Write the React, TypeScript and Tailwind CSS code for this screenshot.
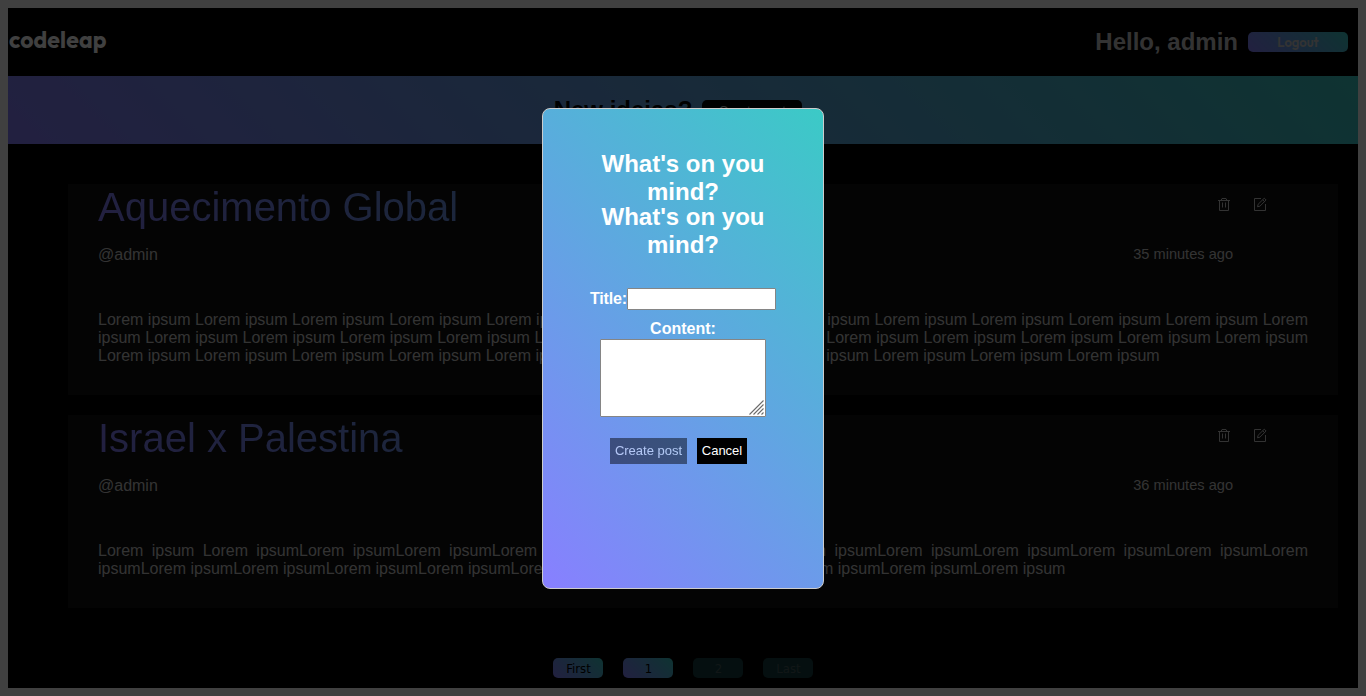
import React from "react";

const brand = "bg-linear-[45deg,#887fff,#3bcac6]";
const geometric = "font-[Outfit,Lato,sans-serif]";

function TrashIcon() {
  return (
    <svg width="14" height="14" viewBox="0 0 14 14" fill="none" stroke="currentColor" strokeWidth="1">
      <path d="M1 3.5H13M4.5 3.5V2L5 1.5H9L9.5 2V3.5M2.5 3.5V13.5H11.5V3.5M5.5 5.5V10.5M8.5 5.5V10.5" />
    </svg>
  );
}

function EditIcon() {
  return (
    <svg width="14" height="14" viewBox="0 0 14 14" fill="none" stroke="currentColor" strokeWidth="1">
      <path d="M8 1.5H1.5V13.5H12.5V7" />
      <path d="M4.5 9.8L5.1 7.3L11.3 1.2L13.1 3L6.9 9.2ZM9.7 2.8L11.5 4.6" />
    </svg>
  );
}

function ResizeGrip() {
  return (
    <svg className="pointer-events-none absolute right-[2px] bottom-[2px]" width="15" height="15" viewBox="0 0 15 15" stroke="#6b6b6b" strokeWidth="1.1">
      <path d="M0.5 14.5L14.5 0.5M4.5 14.5L14.5 4.5M8.5 14.5L14.5 8.5M12.5 14.5L14.5 12.5" />
    </svg>
  );
}

type PostProps = { title: string; author: string; time: string; body: string };

function Post({ title, author, time, body }: PostProps) {
  return (
    <article className="bg-[#101010] px-[30px] pb-[30px] text-[#ccc]">
      <div className="flex h-[46px] items-start justify-between">
        <h2 className="w-full bg-linear-[45deg,#887fff,#3bcac6] bg-clip-text text-[40px] leading-[46px] text-transparent">{title}</h2>
        <div className="flex shrink-0 gap-[22px] pt-[13px] pr-[41px]">
          <TrashIcon />
          <EditIcon />
        </div>
      </div>
      <div className="mt-[15px] flex items-start justify-between leading-[18px]">
        <span className="pt-px">{author}</span>
        <span className="pr-[75px] text-[14.6px]">{time}</span>
      </div>
      <p className="mt-[47px] text-justify leading-[18px]">{body}</p>
    </article>
  );
}

const pages = [
  { label: "First", disabled: false },
  { label: "1", disabled: false },
  { label: "2", disabled: true },
  { label: "Last", disabled: true },
];

const firstBody = Array(36).fill("Lorem ipsum").join(" ");
const secondBody = "Lorem ipsum Lorem " + Array(21).fill("ipsumLorem").join(" ") + " ipsum";

export default function App() {
  return (
    <div className="relative h-[696px] w-[1366px] overflow-hidden bg-white p-2 font-['Liberation_Sans',Arial,sans-serif] text-base">
      <div className="flex h-[680px] flex-col bg-black">
        <header className="flex h-[68px] shrink-0 items-center justify-between pr-[10px]">
          <div className={`${geometric} mb-1 ml-px text-[23px] leading-[30px] font-bold tracking-[0.1px] text-white`}>codeleap</div>
          <div className="flex items-center gap-[10px]">
            <h1 className="text-[24px] font-bold text-[#ccc]">Hello, admin</h1>
            <button className={`${brand} ${geometric} h-5 w-[100px] rounded-[5px] text-[13px] leading-[21px] font-semibold text-[#ccc]`}>Logout</button>
          </div>
        </header>

        <section className={`${brand} flex h-[68px] shrink-0 items-center justify-center gap-[10px] pr-[10px]`}>
          <h2 className="text-[24px] font-bold text-black">New ideias?</h2>
          <button className="h-5 w-[100px] rounded-[5px] bg-black text-[13px] leading-[22px] text-[#ccc]">Create post</button>
        </section>

        <main className="mt-10 mr-5 ml-[60px] flex flex-col gap-5">
          <Post title="Aquecimento Global" author="@admin" time="35 minutes ago" body={firstBody} />
          <Post title="Israel x Palestina" author="@admin" time="36 minutes ago" body={secondBody} />
        </main>

        <nav className="mt-[50px] flex justify-center gap-5">
          {pages.map((p) => (
            <button
              key={p.label}
              className={`h-5 w-[50px] rounded-[5px] pl-px font-['DejaVu_Sans_Condensed','DejaVu_Sans',sans-serif] text-[13px] leading-[21px] ${
                p.disabled ? "bg-[#143e40] text-[#465a5c]" : "bg-linear-[45deg,#887fff,#3bcac6] text-black"
              }`}
            >
              {p.label}
            </button>
          ))}
        </nav>
      </div>

      <div className="absolute inset-0 flex justify-center bg-black/75 pt-[108px]">
        <form className={`${brand} flex h-[481px] w-[282px] flex-col items-center rounded-[8px] border border-[#ccc] font-bold text-white`}>
          <h2 className="mt-[41px] w-[180px] text-center text-[24px] leading-[28px]">What's on you mind?</h2>
          <h2 className="-mt-[3px] w-[180px] text-center text-[24px] leading-[28px]">What's on you mind?</h2>
          <div className="mt-[29px] flex items-center leading-[18px]">
            <label htmlFor="title" className="tracking-[-0.15px]">Title:</label>
            <input id="title" className="h-[22px] w-[149px] rounded-[1px] border border-[#858585] bg-white" />
          </div>
          <label htmlFor="content" className="mt-[10px] leading-[18px]">Content:</label>
          <div className="relative mt-px h-[78px] w-[166px]">
            <textarea id="content" className="block h-full w-full resize-none rounded-[1px] border border-[#858585] bg-white" />
            <ResizeGrip />
          </div>
          <div className="mt-[21px] mr-[9px] flex gap-[10px] text-[13px] leading-[16px] font-normal">
            <button type="button" className="h-[26px] w-[77px] bg-black opacity-[.47]">Create post</button>
            <button type="button" className="h-[26px] w-[50px] bg-black">Cancel</button>
          </div>
        </form>
      </div>
    </div>
  );
}
